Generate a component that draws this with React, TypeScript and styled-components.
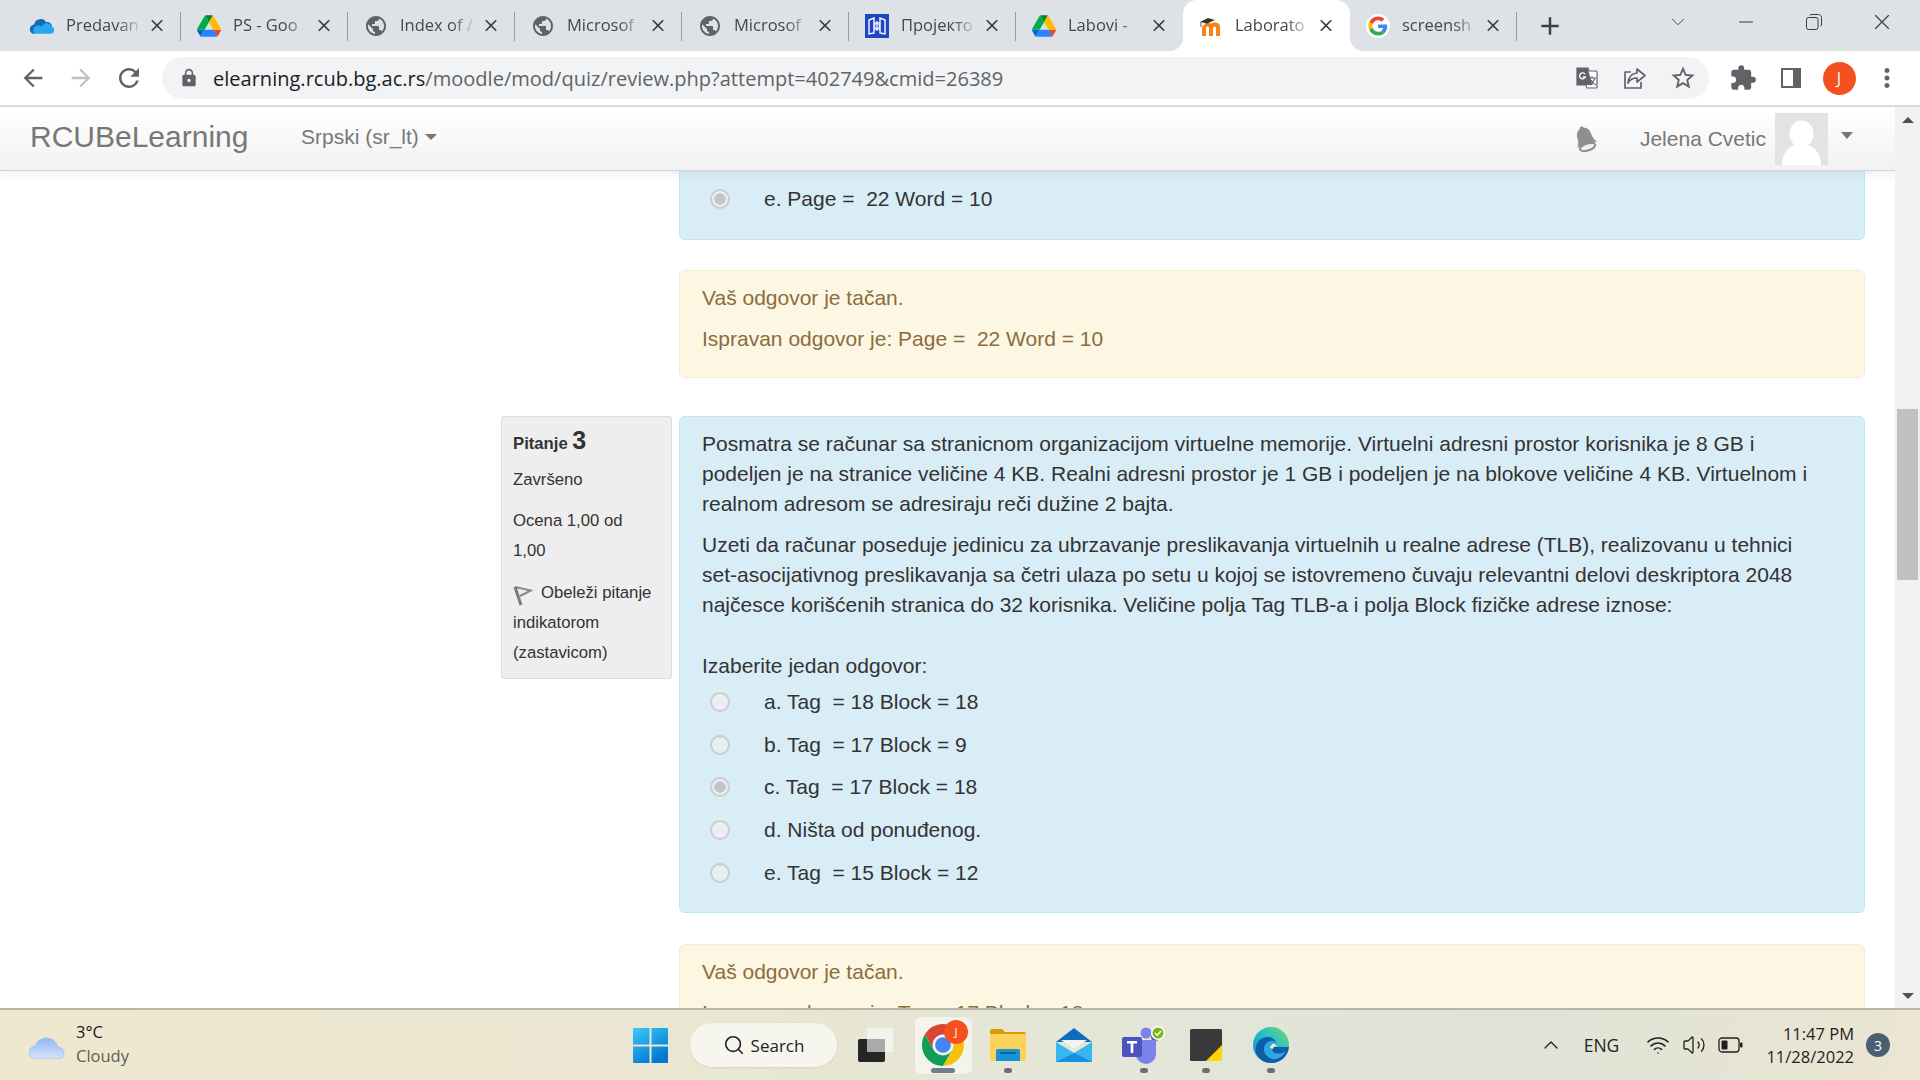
import { ReactNode } from "react";
import styled, { createGlobalStyle } from "styled-components";
import { MdAdd, MdArrowBack, MdArrowForward, MdClose, MdExtension, MdLock, MdMoreVert, MdPublic, MdRefresh, MdStarBorder } from "react-icons/md";
import { Search, Volume2, Wifi, ChevronUp, ChevronDown, Minus, X } from "lucide-react";

const SEGOE = `"Open Sans", "Noto Sans", sans-serif`;
const ARIAL = `"Liberation Sans", Arial, sans-serif`;

const GlobalStyle = createGlobalStyle`
  html, body {
    margin: 0;
    padding: 0;
    height: 100%;
    overflow: hidden;
    background: #fff;
  }
  * {
    box-sizing: border-box;
  }
`;

const Page = styled.div`
  width: 1920px;
  height: 1080px;
  display: flex;
  flex-direction: column;
  overflow: hidden;
`;

/* browser chrome */

const TabStrip = styled.div`
  height: 51px;
  flex: none;
  display: flex;
  padding-left: 14px;
  background: #dee1e6;
  font-family: ${SEGOE};
`;

const Tab = styled.div<{ $active?: boolean; $noSep?: boolean }>`
  position: relative;
  width: 167px;
  height: 51px;
  flex: none;
  display: flex;
  align-items: center;
  padding-left: 16px;
  background: ${(p) => (p.$active ? "#fff" : "transparent")};
  border-radius: ${(p) => (p.$active ? "14px 14px 0 0" : "0")};

  &::after {
    content: "";
    display: ${(p) => (p.$active || p.$noSep ? "none" : "block")};
    position: absolute;
    right: 0;
    top: 12px;
    width: 1px;
    height: 29px;
    background: #9a9ca0;
  }
`;

const TabCorner = styled.span<{ $side: "left" | "right" }>`
  position: absolute;
  bottom: 0;
  ${(p) => p.$side}: -14px;
  width: 14px;
  height: 14px;
  background: radial-gradient(
    circle at ${(p) => (p.$side === "left" ? "0 0" : "100% 0")},
    transparent 14px,
    #fff 14.5px
  );
`;

const TabIcon = styled.span`
  width: 24px;
  height: 24px;
  flex: none;
  display: flex;
  align-items: center;
  justify-content: center;
  color: #5f6368;
`;

const TabTitle = styled.span`
  width: 74px;
  margin: -2px 0 0 12px;
  flex: none;
  overflow: hidden;
  white-space: nowrap;
  font-size: 16.5px;
  color: #45474a;
  -webkit-mask-image: linear-gradient(90deg, #000 70%, rgba(0, 0, 0, 0.1) 100%);
  mask-image: linear-gradient(90deg, #000 70%, rgba(0, 0, 0, 0.1) 100%);
`;

const TabClose = styled.span`
  margin-left: 7px;
  width: 20px;
  height: 20px;
  flex: none;
  display: flex;
  align-items: center;
  justify-content: center;
  color: #3c4043;
`;

const NewTab = styled.span`
  margin-left: 18px;
  width: 30px;
  height: 51px;
  flex: none;
  display: flex;
  align-items: center;
  justify-content: center;
  color: #3c4043;
`;

const WindowControls = styled.div`
  margin-left: 79px;
  display: flex;
  align-items: flex-start;
  color: #3a3a3a;
`;

const WindowButton = styled.span<{ $width: number }>`
  width: ${(p) => p.$width}px;
  height: 44px;
  display: flex;
  align-items: center;
  justify-content: center;
`;

const Toolbar = styled.div`
  height: 54px;
  flex: none;
  display: flex;
  align-items: center;
  padding-left: 9px;
  background: #fff;
`;

const NavButton = styled.span<{ $color?: string }>`
  width: 48px;
  height: 48px;
  flex: none;
  display: flex;
  align-items: center;
  justify-content: center;
  color: ${(p) => p.$color ?? "#5f6368"};
`;

const Omnibox = styled.div`
  margin: 0 10px 0 9px;
  width: 1547px;
  height: 42px;
  flex: none;
  display: flex;
  align-items: center;
  padding-left: 17px;
  border-radius: 21px;
  background: #f1f3f4;
  color: #5f6368;
`;

const UrlText = styled.span`
  margin: 1px 0 0 14px;
  flex: 1;
  font-family: ${SEGOE};
  font-size: 20.05px;
  color: #5f6368;
  white-space: nowrap;
`;

const UrlHost = styled.span`
  color: #202124;
`;

const OmniIcons = styled.div`
  display: flex;
  margin-right: 2px;
`;

const ProfileBadge = styled.span`
  width: 33px;
  height: 33px;
  border-radius: 50%;
  background: #f4511e;
  color: #fff;
  font-family: ${SEGOE};
  font-size: 16px;
  display: flex;
  align-items: center;
  justify-content: center;
`;

const ToolbarRule = styled.div`
  height: 2px;
  flex: none;
  background: #dadada;
`;

/* moodle page */

const Viewport = styled.div`
  flex: 1;
  min-height: 0;
  display: flex;
  overflow: hidden;
`;

const Main = styled.div`
  flex: 1;
  min-width: 0;
  display: flex;
  flex-direction: column;
  overflow: hidden;
  font-family: ${ARIAL};
  color: #333;
`;

const Navbar = styled.header`
  position: relative;
  z-index: 2;
  height: 64px;
  flex: none;
  display: flex;
  align-items: center;
  padding: 0 0 0 30px;
  background: linear-gradient(#fff, #f2f2f2);
  border-bottom: 1px solid #d4d4d4;
  box-shadow: 0 2px 10px rgba(0, 0, 0, 0.08);
  color: #777;
`;

const Brand = styled.span`
  font-size: 30px;
  width: 271px;
  margin-top: -4px;
  flex: none;
`;

const LangMenu = styled.span`
  font-size: 21px;
  margin-top: -3px;
  display: flex;
  align-items: center;
  gap: 6px;
`;

const Caret = styled.span`
  width: 0;
  height: 0;
  border-left: 6px solid transparent;
  border-right: 6px solid transparent;
  border-top: 6px solid #777;
`;

const BellSlot = styled.span`
  margin-left: auto;
  width: 26px;
  height: 30px;
  display: flex;
`;

const UserName = styled.span`
  margin-left: 42px;
  font-size: 21px;
  margin-top: 1px;
`;

const AvatarBox = styled.span`
  margin-left: 9px;
  width: 53px;
  height: 52px;
  margin-top: 1px;
  background: #e3e3e3;
  display: block;
`;

const UserCaret = styled(Caret)`
  margin: -6px 42px 0 13px;
  border-top-width: 7px;
`;

const Content = styled.main`
  flex: 1;
  min-height: 0;
  overflow: hidden;
  padding: 0 30px 0 501px;
  font-size: 21px;
  line-height: 30px;
`;

const AnswerTail = styled.section`
  margin-left: 178px;
  height: 69px;
  padding: 7px 22px 0;
  background: #d9edf7;
  border: 1px solid #bce8f1;
  border-top: 0;
  border-radius: 0 0 6px 6px;
`;

const Feedback = styled.div<{ $mt: number }>`
  margin: ${(p) => p.$mt}px 0 0 178px;
  padding: 12px 22px;
  background: #fdf6e3;
  border: 1px solid #faebcc;
  border-radius: 6px;
  color: #8a6d3b;
  white-space: pre-wrap;
`;

const FeedbackLine = styled.div`
  margin-bottom: 11px;
`;

const Question = styled.div`
  margin-top: 38px;
  display: flex;
  align-items: flex-start;
  gap: 7px;
`;

const InfoBox = styled.aside`
  width: 171px;
  height: 263px;
  flex: none;
  padding: 8px 11px;
  background: #eee;
  border: 1px solid #ddd;
  border-radius: 3px;
  font-size: 16.7px;
  line-height: 30px;
`;

const InfoTitle = styled.h3`
  margin: 0 0 6px;
  font-size: 16.7px;
  line-height: 30px;
  font-weight: 700;
`;

const InfoNumber = styled.span`
  font-size: 25px;
`;

const InfoLine = styled.div<{ $mb?: number }>`
  margin-bottom: ${(p) => p.$mb ?? 0}px;
`;

const FlagIcon = styled.svg`
  width: 20px;
  height: 22px;
  margin: 0 8px -8px 0;
`;

const QuestionBox = styled.section`
  flex: 1;
  height: 497px;
  padding: 12px 40px 12px 22px;
  background: #d9edf7;
  border: 1px solid #bce8f1;
  border-radius: 6px;
`;

const Paragraph = styled.p`
  margin: 0 0 11px;
`;

const Prompt = styled.div`
  margin-top: 31px;
`;

const Option = styled.div`
  display: flex;
  align-items: center;
  height: 42.6px;
  padding-left: 8px;
  white-space: pre-wrap;
`;

const Radio = styled.span<{ $checked?: boolean }>`
  width: 20px;
  height: 20px;
  margin-right: 34px;
  flex: none;
  border-radius: 50%;
  border: 2px solid #c9cdd0;
  background: ${(p) => (p.$checked ? "radial-gradient(circle, #c2c6c9 0 5.5px, #e9eff3 6px)" : "#e9eff3")};
`;

const OptionRow = ({ text, checked }: { text: string; checked?: boolean }) => (
  <Option>
    <Radio $checked={checked} />
    {text}
  </Option>
);

const Scrollbar = styled.div`
  width: 25px;
  flex: none;
  display: flex;
  flex-direction: column;
  align-items: center;
  padding: 10px 0 9px;
  background: #f1f1f1;
`;

const ScrollArrow = styled.span<{ $down?: boolean }>`
  width: 0;
  height: 0;
  flex: none;
  border-left: 6px solid transparent;
  border-right: 6px solid transparent;
  ${(p) => (p.$down ? "border-top: 6px solid #505050;" : "border-bottom: 6px solid #505050;")}
`;

const ScrollTrack = styled.div`
  flex: 1;
  width: 100%;
  padding: 286px 2px 0;
`;

const ScrollThumb = styled.div`
  height: 171px;
  background: #c1c1c1;
`;

/* taskbar */

const Taskbar = styled.footer`
  height: 72px;
  flex: none;
  display: flex;
  align-items: center;
  padding-left: 29px;
  border-top: 2px solid #b9b6a6;
  background: linear-gradient(100deg, #efe8cf 0%, #e9e6d2 40%, #e2e6d9 62%, #dfe3d6 80%, #ece5d2 100%);
  font-family: ${SEGOE};
  color: #1b1b1b;
`;

const Weather = styled.div`
  width: 604px;
  flex: none;
  display: flex;
  align-items: center;
  gap: 11px;
`;

const WeatherText = styled.div`
  display: flex;
  flex-direction: column;
  margin-top: -2px;
  font-size: 16.5px;
  line-height: 24px;
`;

const WeatherNote = styled.span`
  color: #5c5c58;
`;

const SearchPill = styled.div`
  margin-left: 22px;
  width: 147px;
  height: 44px;
  flex: none;
  display: flex;
  align-items: center;
  justify-content: center;
  gap: 6px;
  border-radius: 22px;
  background: #f6f5ee;
  box-shadow: 0 1px 2px rgba(0, 0, 0, 0.08);
  font-size: 17px;
  color: #222;
`;

const AppSlot = styled.span<{ $width: number; $ml: number; $active?: boolean }>`
  position: relative;
  width: ${(p) => p.$width}px;
  height: 57px;
  margin-left: ${(p) => p.$ml}px;
  flex: none;
  display: flex;
  align-items: center;
  justify-content: center;
  border-radius: 5px;
  background: ${(p) => (p.$active ? "rgba(255,255,255,0.55)" : "transparent")};
  box-shadow: ${(p) => (p.$active ? "3px 0 0 -1px rgba(255,255,255,0.5), 0 0 1px rgba(0,0,0,0.15)" : "none")};
`;

const AppDot = styled.span<{ $wide?: boolean }>`
  position: absolute;
  left: 50%;
  bottom: 1px;
  transform: translateX(-50%);
  width: ${(p) => (p.$wide ? 24 : 8)}px;
  height: 5px;
  border-radius: 3px;
  background: ${(p) => (p.$wide ? "#6d7f8c" : "#6f6f6c")};
`;

const AppBadge = styled.span`
  position: absolute;
  top: 3px;
  right: 2px;
  width: 24px;
  height: 24px;
  border-radius: 50%;
  background: #f4511e;
  color: #fff;
  font-size: 11px;
  display: flex;
  align-items: center;
  justify-content: center;
`;

const Tray = styled.div`
  margin-left: auto;
  display: flex;
  align-items: center;
  color: #1f1f1f;
`;

const TrayIcon = styled.span<{ $width: number }>`
  width: ${(p) => p.$width}px;
  flex: none;
  display: flex;
  justify-content: center;
`;

const TrayLang = styled.span`
  width: 77px;
  text-align: center;
  font-size: 17.5px;
`;

const Clock = styled.div`
  margin-left: 16px;
  width: 90px;
  text-align: right;
  white-space: nowrap;
  font-size: 16.5px;
  line-height: 23px;
`;

const NotifyBadge = styled.span`
  margin: 0 30px 0 12px;
  width: 24px;
  height: 24px;
  border-radius: 50%;
  background: #4a6072;
  color: #fff;
  font-size: 14px;
  display: flex;
  align-items: center;
  justify-content: center;
`;

/* drawings */

const OneDriveIcon = () => (
  <svg width="26" height="18" viewBox="0 0 26 18">
    <path d="M5 17.5a5 5 0 0 1-.5-10A7 7 0 0 1 17.5 5 5 5 0 0 1 24 9.5h-8L5 17.5z" fill="#0f6cbd" />
    <path d="M5 17.5h17a4 4 0 0 0 1.5-7.8A5.5 5.5 0 0 0 13 10a4.5 4.5 0 0 0-8 7.5z" fill="#28a8ea" />
  </svg>
);

const DriveIcon = () => (
  <svg width="24" height="22" viewBox="0 0 87.3 78">
    <path d="m6.6 66.85 3.85 6.65c.8 1.4 1.95 2.5 3.3 3.3l13.75-23.8h-27.5c0 1.55.4 3.1 1.2 4.5z" fill="#0066da" />
    <path d="m43.65 25-13.75-23.8c-1.35.8-2.5 1.9-3.3 3.3l-25.4 44a9.06 9.06 0 0 0 -1.2 4.5h27.5z" fill="#00ac47" />
    <path d="m73.55 76.8c1.35-.8 2.5-1.9 3.3-3.3l1.6-2.75 7.65-13.25c.8-1.4 1.2-2.95 1.2-4.5h-27.502l5.852 11.5z" fill="#ea4335" />
    <path d="m43.65 25 13.75-23.8c-1.35-.8-2.9-1.2-4.5-1.2h-18.5c-1.6 0-3.15.45-4.5 1.2z" fill="#00832d" />
    <path d="m59.8 53h-32.3l-13.75 23.8c1.35.8 2.9 1.2 4.5 1.2h50.8c1.6 0 3.15-.45 4.5-1.2z" fill="#2684fc" />
    <path d="m73.4 26.5-12.7-22c-.8-1.4-1.95-2.5-3.3-3.3l-13.75 23.8 16.15 28h27.45c0-1.55-.4-3.1-1.2-4.5z" fill="#ffba00" />
  </svg>
);

const GoogleIcon = () => (
  <svg width="26" height="26" viewBox="-6 -6 60 60">
    <circle cx="24" cy="24" r="30" fill="#fff" />
    <path fill="#EA4335" d="M24 9.5c3.54 0 6.71 1.22 9.21 3.6l6.85-6.85C35.9 2.38 30.47 0 24 0 14.62 0 6.51 5.38 2.56 13.22l7.98 6.19C12.43 13.72 17.74 9.5 24 9.5z" />
    <path fill="#4285F4" d="M46.98 24.55c0-1.57-.15-3.09-.38-4.55H24v9.02h12.94c-.58 2.96-2.26 5.48-4.78 7.18l7.73 6c4.51-4.18 7.09-10.36 7.09-17.65z" />
    <path fill="#FBBC05" d="M10.53 28.59c-.48-1.45-.76-2.99-.76-4.59s.27-3.14.76-4.59l-7.98-6.19C.92 16.46 0 20.12 0 24c0 3.88.92 7.54 2.56 10.78l7.97-6.19z" />
    <path fill="#34A853" d="M24 48c6.48 0 11.93-2.13 15.89-5.81l-7.73-6c-2.15 1.45-4.92 2.3-8.16 2.3-6.26 0-11.57-4.22-13.47-9.91l-7.98 6.19C6.51 42.62 14.62 48 24 48z" />
  </svg>
);

const FacultyIcon = () => (
  <svg width="24" height="24" viewBox="0 0 24 24">
    <rect width="24" height="24" fill="#1c46c4" />
    <path d="M4 6l5-2v15l-5 1zM20 6l-5-2v15l5 1z" fill="none" stroke="#fff" strokeWidth="1.4" />
    <path d="M9 9h6M9 15h6M12 7v10" stroke="#dfe6ff" strokeWidth="1.4" />
    <circle cx="12" cy="12" r="2.4" fill="none" stroke="#fff" />
  </svg>
);

const MoodleIcon = () => (
  <svg width="24" height="22" viewBox="0 0 24 22">
    <path d="M6 9c2-2 5-2 6 0 1-2 6-2 8 0 1 1 1 3 1 4v8h-4v-8c0-2-3-2-3 0v8h-4v-8c0-2-3-2-3 0v8H3v-9z" fill="#f98012" />
    <path d="M1 7l8-4 7 2-8 3.5z" fill="#333" />
    <path d="M2 7v5" stroke="#555" strokeWidth="1" />
  </svg>
);

const TranslateIcon = () => (
  <svg width="22" height="22" viewBox="0 0 22 22">
    <path d="M1 1h11l1 3h7a1 1 0 0 1 1 1v15a1 1 0 0 1-1 1h-9l-1-3H1z" fill="#fff" stroke="#5f6368" strokeWidth="1.2" />
    <path d="M1 1h10.5l5 17H1z" fill="#5f6368" />
    <path d="M9 7a3 3 0 1 0 .4 3H6.8" fill="none" stroke="#fff" strokeWidth="1.4" />
    <path d="M13 11h7M16 9v2M14 18c3-2 4-4 5-7M15 13c1 2 3 4 5 5" stroke="#5f6368" strokeWidth="1.1" fill="none" />
  </svg>
);

const ShareIcon = () => (
  <svg width="24" height="22" viewBox="0 0 24 22" fill="none" stroke="#5f6368" strokeWidth="1.7" strokeLinejoin="round">
    <path d="M8 5H2v16h16v-6" />
    <path d="M14 2l8 6.5-8 6.5v-4c-4 0-7 1.5-9 5 .5-6 4-9.5 9-10z" />
  </svg>
);

const SidePanelIcon = () => (
  <svg width="22" height="22" viewBox="0 0 22 22">
    <path d="M1 1h20v20H1z" fill="#5f6368" />
    <path d="M3 3h10v16H3z" fill="#fff" />
  </svg>
);

const RestoreIcon = () => (
  <svg width="16" height="16" viewBox="0 0 16 16" fill="none" stroke="#3a3a3a" strokeWidth="1">
    <rect x="0.5" y="3.5" width="11.5" height="12" rx="2" />
    <path d="M4 1.5c0-.6.5-1 1-1h7.5c1.5 0 3 1.5 3 3V11c0 .6-.4 1-1 1" />
  </svg>
);

const BellIcon = () => (
  <svg width="26" height="30" viewBox="0 0 26 30">
    <g transform="rotate(-18 13 15)">
      <path d="M13 2c1.5 0 2.2 1 2.2 2 3.5 1 5.3 4 5.3 8 0 5 1.500 7 3 9H3c1.500-2 3-4 3-9 0-4 1.800-7 5-8 0-1 .7-2 2-2z" fill="#8f8f8f" />
      <ellipse cx="13" cy="23.5" rx="8" ry="3.4" fill="#f1f1f1" stroke="#8f8f8f" strokeWidth="2" />
    </g>
  </svg>
);

const AvatarFigure = () => (
  <svg width="53" height="52" viewBox="0 0 53 52">
    <ellipse cx="26.5" cy="21" rx="12" ry="13.5" fill="#fff" />
    <path d="M7 52c0-11 6-18 13-20h13c7 2 13 9 13 20z" fill="#fff" />
  </svg>
);

const CloudIcon = () => (
  <svg width="36" height="27" viewBox="0 0 36 27">
    <defs>
      <linearGradient id="cloudFill" x1="0" y1="0" x2="0" y2="1">
        <stop offset="0" stopColor="#8fb7f5" />
        <stop offset="1" stopColor="#d6e4f7" />
      </linearGradient>
    </defs>
    <path d="M7 27a6.500 6.500 0 0 1-1-13 12 12 0 0 1 23 1 6 6 0 0 1 0 12z" fill="url(#cloudFill)" stroke="#a8c4ef" />
  </svg>
);

const WindowsLogo = () => (
  <svg width="35" height="35" viewBox="0 0 35 35" style={{ flex: "none" }}>
    <defs>
      <linearGradient id="winFill" x1="0" y1="0" x2="0.6" y2="1">
        <stop offset="0" stopColor="#3cc8f8" />
        <stop offset="1" stopColor="#0078d4" />
      </linearGradient>
    </defs>
    <path d="M1 0h15.500v16.500H0V1a1 1 0 0 1 1-1zM18.500 0H34a1 1 0 0 1 1 1v15.500H18.500zM0 18.500h16.500V35H1a1 1 0 0 1-1-1zM18.500 18.500H35V34a1 1 0 0 1-1 1H18.500z" fill="url(#winFill)" />
  </svg>
);

const TaskViewIcon = () => (
  <svg width="35" height="34" viewBox="0 0 35 34">
    <rect x="0" y="11" width="27" height="23" rx="2" fill="#262626" />
    <rect x="9" y="0" width="26" height="24" rx="2" fill="#f4f4f1" fillOpacity="0.85" />
    <rect x="9" y="11" width="18" height="13" fill="#aaa" />
  </svg>
);

const ChromeIcon = () => (
  <svg width="42" height="42" viewBox="4 4 40 40">
    <path d="M6.68 14A20 20 0 0 1 41.32 14H24A10 10 0 0 0 15.34 29z" fill="#db4437" />
    <path d="M24 44A20 20 0 0 1 6.68 14L15.34 29A10 10 0 0 0 32.66 29z" fill="#0f9d58" />
    <path d="M41.32 14A20 20 0 0 1 24 44L32.66 29A10 10 0 0 0 24 14z" fill="#f4c20d" />
    <circle cx="24" cy="24" r="9.5" fill="#f1f3f4" />
    <circle cx="24" cy="24" r="7.5" fill="#4285f4" />
  </svg>
);

const FolderIcon = () => (
  <svg width="36" height="32" viewBox="0 0 36 32">
    <path d="M0 2a2 2 0 0 1 2-2h10l3 3h19a2 2 0 0 1 2 2v3H0z" fill="#d99a0b" />
    <path d="M0 5h36v25a2 2 0 0 1-2 2H2a2 2 0 0 1-2-2z" fill="#fcd25a" />
    <path d="M6 32V22a2 2 0 0 1 2-2h20a2 2 0 0 1 2 2v10z" fill="#1b8fd6" />
    <rect x="10" y="23" width="16" height="2" fill="#0b5f9e" />
  </svg>
);

const MailIcon = () => (
  <svg width="36" height="34" viewBox="0 0 36 34">
    <path d="M18 0L36 14H0z" fill="#0f6cbd" />
    <path d="M5 12h26L18 21z" fill="#f3f3f3" />
    <path d="M0 14l18 11 18-11v20H0z" fill="#38b6ef" />
    <path d="M0 34l18-9 18 9z" fill="#1490df" />
  </svg>
);

const TeamsIcon = () => (
  <svg width="44" height="38" viewBox="0 0 44 38">
    <circle cx="24" cy="7" r="5.500" fill="#7b83eb" />
    <circle cx="33" cy="11" r="4" fill="#5059c9" />
    <path d="M14 14h20v14a10 10 0 0 1-20 0z" fill="#7b83eb" />
    <rect x="0" y="11" width="20" height="20" rx="2" fill="#4b53bc" />
    <path d="M5 15h10v2.500h-3.700V27h-2.600V17.500H5z" fill="#fff" />
    <circle cx="36" cy="7" r="7" fill="#fff" />
    <circle cx="36" cy="7" r="5.500" fill="#7cb518" />
    <path d="M33 7l2.200 2.200L39 5" fill="none" stroke="#fff" strokeWidth="1.500" />
  </svg>
);

const StickyIcon = () => (
  <svg width="32" height="32" viewBox="0 0 32 32">
    <rect width="32" height="32" rx="1.500" fill="#3a3a3a" />
    <path d="M16 32L32 16v16z" fill="#ffd400" />
  </svg>
);

const EdgeIcon = () => (
  <svg width="36" height="36" viewBox="0 0 36 36">
    <defs>
      <linearGradient id="edgeTop" x1="0" y1="1" x2="1" y2="0">
        <stop offset="0" stopColor="#0c8ed9" />
        <stop offset="0.6" stopColor="#2bc4c4" />
        <stop offset="1" stopColor="#7ed957" />
      </linearGradient>
    </defs>
    <circle cx="18" cy="18" r="18" fill="url(#edgeTop)" />
    <path d="M3 26C1 16 8 9 16 10c6 1 9 6 7 10h13c-1 9-8 16-18 16-7 0-12-4-15-10z" fill="#0d5ea8" />
    <path d="M11 22c0-6 5-9 10-8 3 1 4 4 3 6-3-2-6 0-5 3 1 4 8 5 14 1-3 6-9 9-14 8-5-2-8-5-8-10z" fill="#2ea7e0" />
    <path d="M17 21c0-3 3-5 5-4 2 1 2 3 2 3-2-1-4 0-4 2z" fill="#e8ecdc" />
  </svg>
);

const BatteryIcon = () => (
  <svg width="25" height="16" viewBox="0 0 25 16">
    <rect x="1" y="1" width="20" height="14" rx="3" fill="none" stroke="#1f1f1f" strokeWidth="1.300" />
    <rect x="3.500" y="3.500" width="6" height="9" rx="1" fill="#1f1f1f" />
    <rect x="22" y="5.500" width="2.500" height="5" rx="1" fill="#1f1f1f" />
  </svg>
);

interface TabInfo {
  title: string;
  icon: ReactNode;
  active?: boolean;
  noSep?: boolean;
}

const TABS: TabInfo[] = [
  { title: "Predavan", icon: <OneDriveIcon /> },
  { title: "PS - Goo", icon: <DriveIcon /> },
  { title: "Index of /", icon: <MdPublic size={26} /> },
  { title: "Microsof", icon: <MdPublic size={26} /> },
  { title: "Microsof", icon: <MdPublic size={26} /> },
  { title: "Пројекто", icon: <FacultyIcon /> },
  { title: "Labovi -", icon: <DriveIcon />, noSep: true },
  { title: "Laborato", icon: <MoodleIcon />, active: true },
  { title: "screensh", icon: <GoogleIcon /> },
];

const App = () => (
  <Page>
    <GlobalStyle />
    <TabStrip>
      {TABS.map((tab, i) => (
        <Tab key={i} $active={tab.active} $noSep={tab.noSep}>
          {tab.active && <TabCorner $side="left" />}
          {tab.active && <TabCorner $side="right" />}
          <TabIcon>{tab.icon}</TabIcon>
          <TabTitle>{tab.title}</TabTitle>
          <TabClose>
            <MdClose size={21} />
          </TabClose>
        </Tab>
      ))}
      <NewTab>
        <MdAdd size={30} />
      </NewTab>
      <WindowControls>
        <WindowButton $width={68}>
          <ChevronDown size={22} strokeWidth={1} />
        </WindowButton>
        <WindowButton $width={68}>
          <Minus size={22} strokeWidth={1.2} />
        </WindowButton>
        <WindowButton $width={68}>
          <RestoreIcon />
        </WindowButton>
        <WindowButton $width={68}>
          <X size={26} strokeWidth={1} />
        </WindowButton>
      </WindowControls>
    </TabStrip>

    <Toolbar>
      <NavButton>
        <MdArrowBack size={28} />
      </NavButton>
      <NavButton $color="#bdc1c6">
        <MdArrowForward size={28} />
      </NavButton>
      <NavButton>
        <MdRefresh size={30} />
      </NavButton>
      <Omnibox>
        <MdLock size={20} />
        <UrlText>
          <UrlHost>elearning.rcub.bg.ac.rs</UrlHost>/moodle/mod/quiz/review.php?attempt=402749&amp;cmid=26389
        </UrlText>
        <OmniIcons>
          <NavButton>
            <TranslateIcon />
          </NavButton>
          <NavButton>
            <ShareIcon />
          </NavButton>
          <NavButton>
            <MdStarBorder size={28} />
          </NavButton>
        </OmniIcons>
      </Omnibox>
      <NavButton>
        <MdExtension size={28} />
      </NavButton>
      <NavButton>
        <SidePanelIcon />
      </NavButton>
      <NavButton>
        <ProfileBadge>J</ProfileBadge>
      </NavButton>
      <NavButton>
        <MdMoreVert size={30} />
      </NavButton>
    </Toolbar>
    <ToolbarRule />

    <Viewport>
      <Main>
        <Navbar>
          <Brand>RCUBeLearning</Brand>
          <LangMenu>
            Srpski (sr_lt)
            <Caret />
          </LangMenu>
          <BellSlot>
            <BellIcon />
          </BellSlot>
          <UserName>Jelena Cvetic</UserName>
          <AvatarBox>
            <AvatarFigure />
          </AvatarBox>
          <UserCaret />
        </Navbar>
        <Content>
          <AnswerTail>
            <OptionRow text="e. Page =  22 Word = 10" checked />
          </AnswerTail>
          <Feedback $mt={30}>
            <FeedbackLine>Vaš odgovor je tačan.</FeedbackLine>
            <FeedbackLine>Ispravan odgovor je: Page =  22 Word = 10</FeedbackLine>
          </Feedback>
          <Question>
            <InfoBox>
              <InfoTitle>
                Pitanje <InfoNumber>3</InfoNumber>
              </InfoTitle>
              <InfoLine $mb={11}>Završeno</InfoLine>
              <InfoLine>Ocena 1,00 od</InfoLine>
              <InfoLine $mb={12}>1,00</InfoLine>
              <InfoLine>
                <FlagIcon viewBox="0 0 20 22">
                  <path d="M2 3L18 6.500 7 12" fill="none" stroke="#8a8a8a" strokeWidth="2" />
                  <path d="M2 3L8 21" fill="none" stroke="#7a7a7a" strokeWidth="3" />
                </FlagIcon>
                Obeleži pitanje
              </InfoLine>
              <InfoLine>indikatorom</InfoLine>
              <InfoLine>(zastavicom)</InfoLine>
            </InfoBox>
            <QuestionBox>
              <Paragraph>
                Posmatra se računar sa stranicnom organizacijom virtuelne memorije. Virtuelni adresni prostor korisnika je 8 GB i podeljen je na stranice veličine 4 KB. Realni adresni prostor je 1 GB i podeljen je na blokove veličine 4 KB. Virtuelnom i realnom adresom se adresiraju reči dužine 2 bajta.
              </Paragraph>
              <Paragraph>
                Uzeti da računar poseduje jedinicu za ubrzavanje preslikavanja virtuelnih u realne adrese (TLB), realizovanu u tehnici set-asocijativnog preslikavanja sa četri ulaza po setu u kojoj se istovremeno čuvaju relevantni delovi deskriptora 2048 najčesce korišćenih stranica do 32 korisnika. Veličine polja Tag TLB-a i polja Block fizičke adrese iznose:
              </Paragraph>
              <Prompt>Izaberite jedan odgovor:</Prompt>
              <OptionRow text="a. Tag  = 18 Block = 18" />
              <OptionRow text="b. Tag  = 17 Block = 9" />
              <OptionRow text="c. Tag  = 17 Block = 18" checked />
              <OptionRow text="d. Ništa od ponuđenog." />
              <OptionRow text="e. Tag  = 15 Block = 12" />
            </QuestionBox>
          </Question>
          <Feedback $mt={31}>
            <FeedbackLine>Vaš odgovor je tačan.</FeedbackLine>
            <FeedbackLine>Ispravan odgovor je: Tag = 17 Block = 18</FeedbackLine>
          </Feedback>
        </Content>
      </Main>
      <Scrollbar>
        <ScrollArrow />
        <ScrollTrack>
          <ScrollThumb />
        </ScrollTrack>
        <ScrollArrow $down />
      </Scrollbar>
    </Viewport>

    <Taskbar>
      <Weather>
        <CloudIcon />
        <WeatherText>
          <span>3°C</span>
          <WeatherNote>Cloudy</WeatherNote>
        </WeatherText>
      </Weather>
      <WindowsLogo />
      <SearchPill>
        <Search size={22} strokeWidth={1.8} />
        Search
      </SearchPill>
      <AppSlot $width={35} $ml={21}>
        <TaskViewIcon />
      </AppSlot>
      <AppSlot $width={55} $ml={22} $active>
        <ChromeIcon />
        <AppBadge>J</AppBadge>
        <AppDot $wide />
      </AppSlot>
      <AppSlot $width={36} $ml={20}>
        <FolderIcon />
        <AppDot />
      </AppSlot>
      <AppSlot $width={36} $ml={30}>
        <MailIcon />
      </AppSlot>
      <AppSlot $width={44} $ml={30}>
        <TeamsIcon />
        <AppDot />
      </AppSlot>
      <AppSlot $width={32} $ml={24}>
        <StickyIcon />
        <AppDot />
      </AppSlot>
      <AppSlot $width={36} $ml={31}>
        <EdgeIcon />
        <AppDot />
      </AppSlot>
      <Tray>
        <TrayIcon $width={24}>
          <ChevronUp size={24} strokeWidth={1.3} />
        </TrayIcon>
        <TrayLang>ENG</TrayLang>
        <TrayIcon $width={36}>
          <Wifi size={24} strokeWidth={1.6} />
        </TrayIcon>
        <TrayIcon $width={36}>
          <Volume2 size={24} strokeWidth={1.3} />
        </TrayIcon>
        <TrayIcon $width={36}>
          <BatteryIcon />
        </TrayIcon>
        <Clock>
          11:47 PM
          <br />
          11/28/2022
        </Clock>
        <NotifyBadge>3</NotifyBadge>
      </Tray>
    </Taskbar>
  </Page>
);

export default App;
